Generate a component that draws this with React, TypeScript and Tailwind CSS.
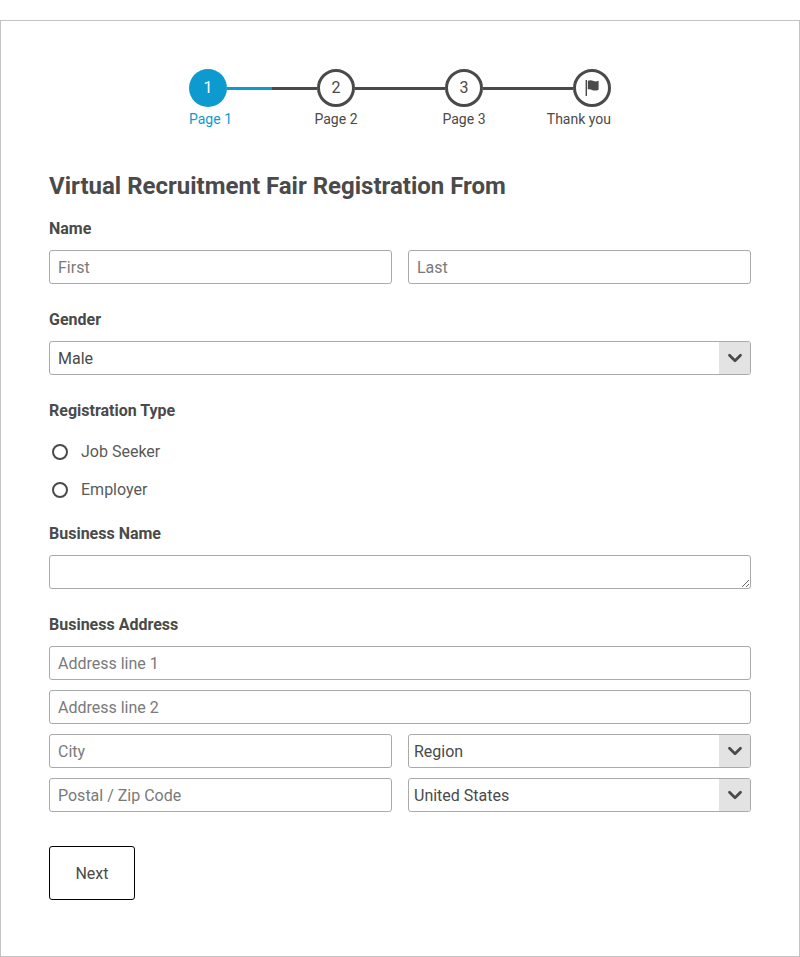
import { ChevronDown } from 'lucide-react'

const fieldClass = 'w-full h-[34px] border border-[#aaaaaa] rounded-[3px] bg-white px-2 text-[16px] text-[#4a4a4a] placeholder:text-[#7a7a7a] outline-none'
const labelClass = 'block text-[16px] leading-[20px] font-bold text-[#4a4a4a]'

function Flag() {
  return (
    <svg width="18" height="18" viewBox="0 0 18 18" fill="#4a4a4a">
      <path d="M2.600 1h1.400v16H2.600z" />
      <path d="M4.800 1.800c1.800-.9 3.400-.9 5.200 0s3.400.8 5.600-.1v9c-2.200 1-4.400 1.200-6.600.2-1.500-.7-2.800-.8-4.200-.3z" />
    </svg>
  )
}

function Circle({ children, active }: { children: React.ReactNode; active?: boolean }) {
  return (
    <div className={active
      ? 'w-[38px] h-[38px] rounded-full bg-[#0d9bcf] text-white flex items-center justify-center text-[16px] flex-shrink-0'
      : 'w-[38px] h-[38px] rounded-full border-[3px] border-[#4a4a4a] bg-white text-[#4a4a4a] flex items-center justify-center text-[16px] flex-shrink-0'}>
      {children}
    </div>
  )
}

function Line({ half }: { half?: boolean }) {
  return (
    <div className="flex-1 h-[3px] bg-[#4a4a4a]">
      {half && <div className="w-1/2 h-full bg-[#0d9bcf]" />}
    </div>
  )
}

function Select({ value }: { value: string }) {
  return (
    <div className="w-full h-[34px] border border-[#aaaaaa] rounded-[3px] bg-white flex items-center justify-between overflow-hidden">
      <span className="pt-px text-[16px] text-[#4a4a4a]">{value}</span>
      <div className="w-[31px] h-full bg-[#e3e3e3] flex items-center justify-center">
        <ChevronDown size={22} strokeWidth={3} className="text-[#4a4a4a]" />
      </div>
    </div>
  )
}

function Radio({ label }: { label: string }) {
  return (
    <div className="flex items-center h-[38px] pl-[3px]">
      <div className="w-[16px] h-[16px] rounded-full border-[2.5px] border-[#4a4a4a] bg-white" />
      <span className="ml-[13px] text-[16px] text-[#5a5a5a]">{label}</span>
    </div>
  )
}

export default function App() {
  return (
    <div className="pt-5 bg-white" style={{ fontFamily: 'Roboto, sans-serif' }}>
      <div className="h-[937px] border border-[#c4c4c4] px-12 pt-[48px]">
        <div className="w-[422px] mx-auto">
          <div className="flex items-center">
            <Circle active>1</Circle>
            <Line half />
            <Circle>2</Circle>
            <Line />
            <Circle>3</Circle>
            <Line />
            <Circle><Flag /></Circle>
          </div>
          <div className="flex justify-between mt-[2px] text-[14px] leading-[20px] text-[#4a4a4a] whitespace-nowrap">
            <div className="w-[38px] flex justify-start text-[#0d9bcf]">Page 1</div>
            <div className="w-[38px] flex justify-center">Page 2</div>
            <div className="w-[38px] flex justify-center">Page 3</div>
            <div className="w-[38px] flex justify-end">Thank you</div>
          </div>
        </div>

        <h1 className="mt-[41px] text-[24px] leading-[32px] font-bold text-[#4a4a4a]">Virtual Recruitment Fair Registration From</h1>

        <label className={`${labelClass} mt-[17px]`}>Name</label>
        <div className="grid grid-cols-2 gap-4 mt-[11px]">
          <input className={fieldClass} placeholder="First" />
          <input className={fieldClass} placeholder="Last" />
        </div>

        <label className={`${labelClass} mt-[26px]`}>Gender</label>
        <div className="mt-[11px] [&>div>span]:pl-2">
          <Select value="Male" />
        </div>

        <label className={`${labelClass} mt-[26px]`}>Registration Type</label>
        <div className="mt-[12px]">
          <Radio label="Job Seeker" />
          <Radio label="Employer" />
        </div>

        <label className={`${labelClass} mt-[15px]`}>Business Name</label>
        <textarea className="block w-full h-[34px] mt-[11px] border border-[#aaaaaa] rounded-[3px] bg-white px-2 text-[16px] outline-none" />

        <label className={`${labelClass} mt-[26px]`}>Business Address</label>
        <div className="flex flex-col gap-[10px] mt-[11px]">
          <input className={fieldClass} placeholder="Address line 1" />
          <input className={fieldClass} placeholder="Address line 2" />
          <div className="grid grid-cols-2 gap-4">
            <input className={fieldClass} placeholder="City" />
            <div className="[&>div>span]:pl-[5px]"><Select value="Region" /></div>
          </div>
          <div className="grid grid-cols-2 gap-4">
            <input className={fieldClass} placeholder="Postal / Zip Code" />
            <div className="[&>div>span]:pl-[5px]"><Select value="United States" /></div>
          </div>
        </div>

        <button className="block mt-[34px] w-[86px] h-[54px] pt-px border border-black rounded-[3px] bg-white text-[16px] text-[#4a4a4a]">Next</button>
      </div>
    </div>
  )
}
